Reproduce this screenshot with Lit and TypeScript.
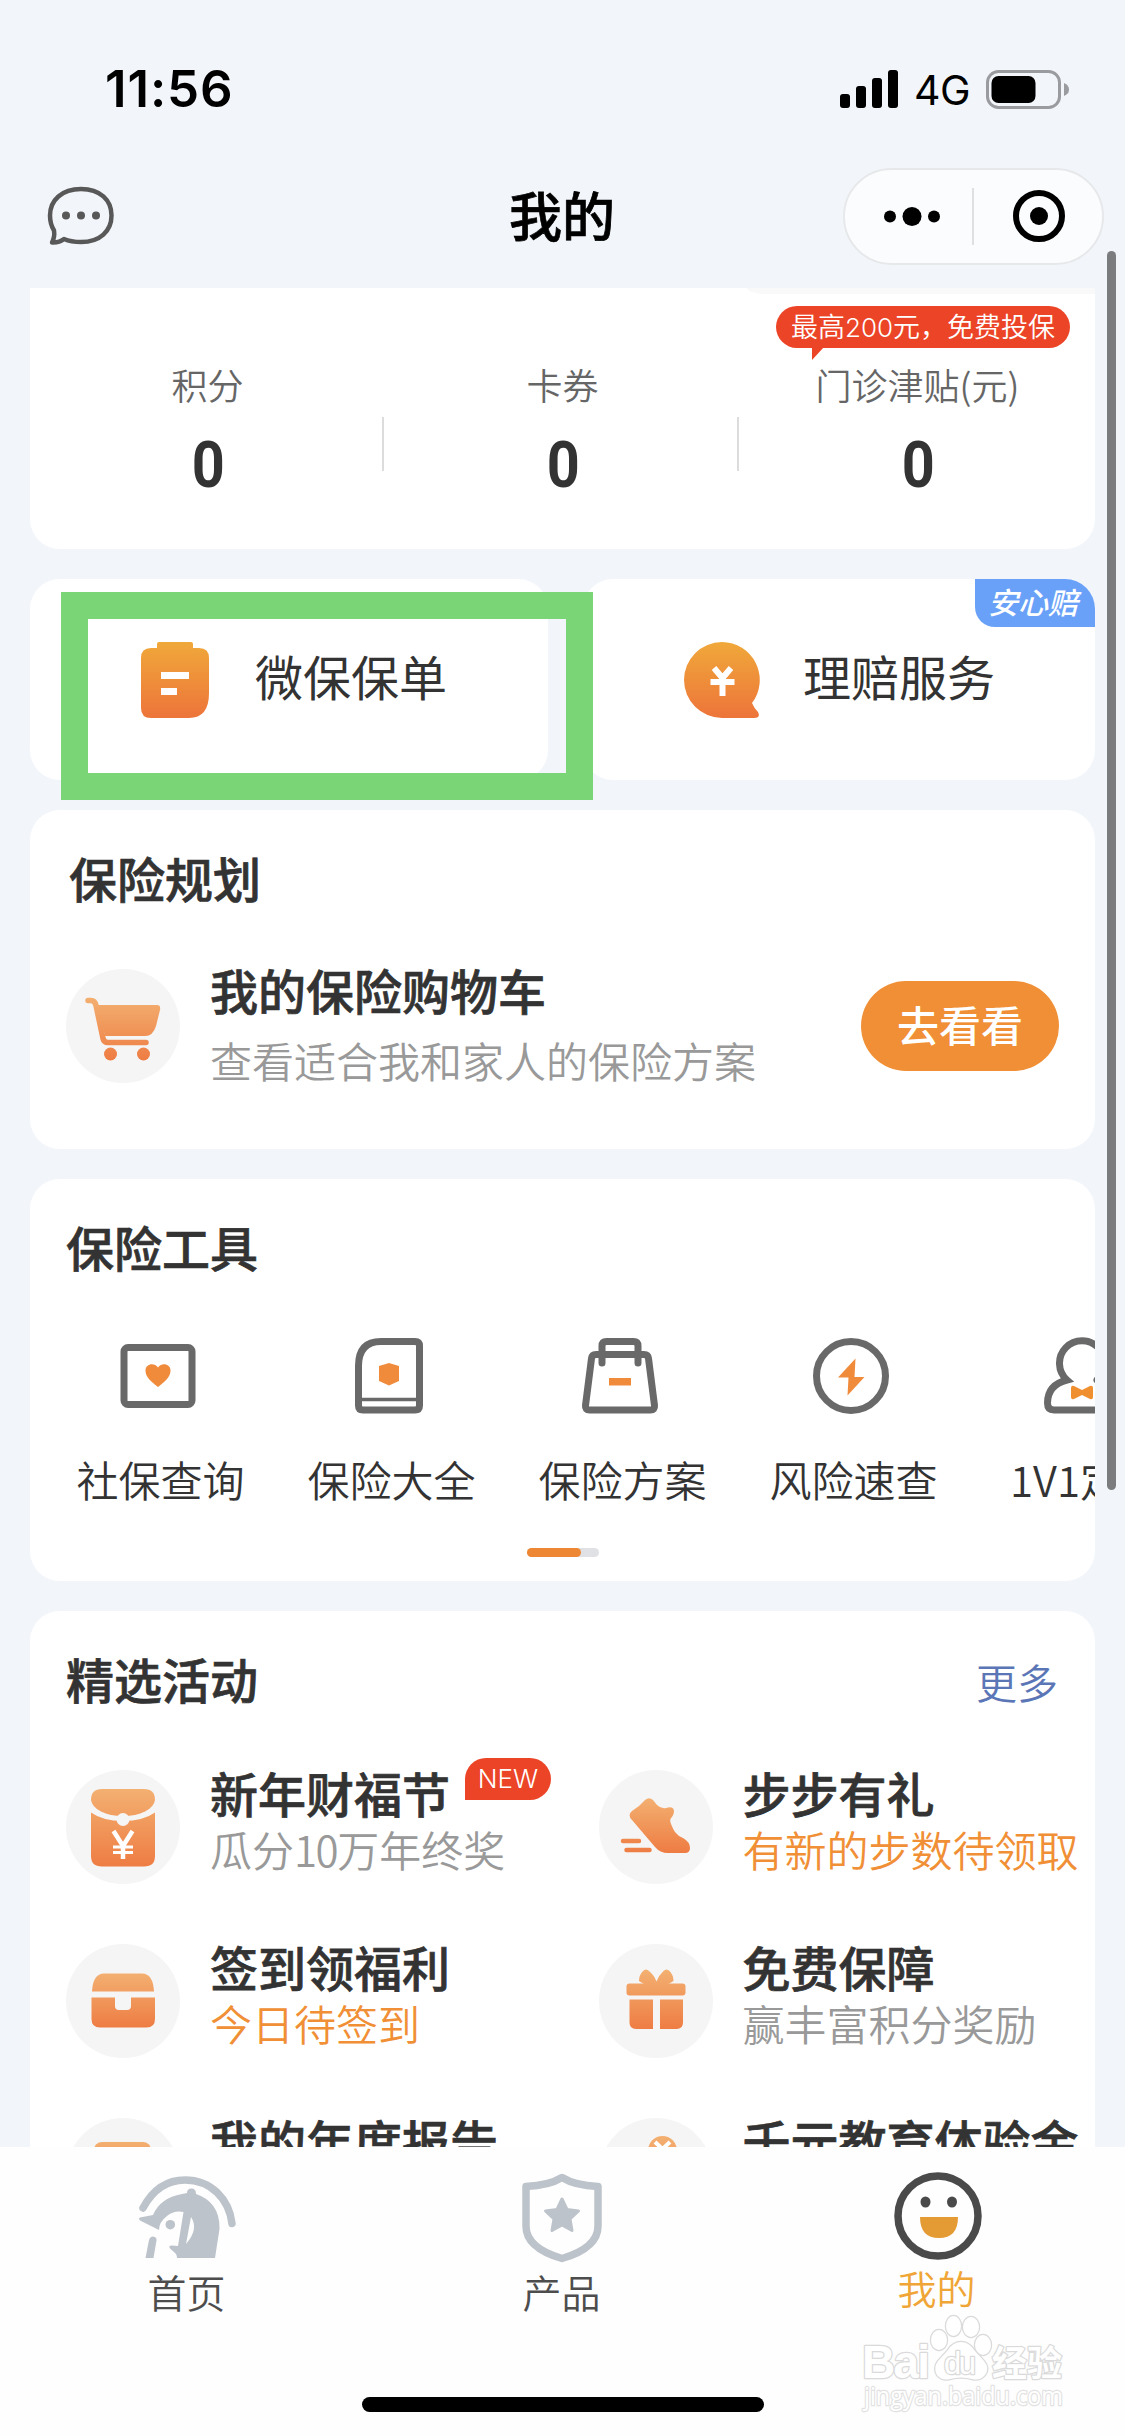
import { LitElement, html, svg, css, TemplateResult } from "lit";
import { customElement } from "lit/decorators.js";

const icon = (w: number, h: number, body: TemplateResult) =>
  html`<svg width=${w} height=${h} viewBox="0 0 ${w} ${h}" fill="none">${body}</svg>`;

const grad = (id: string, y1: number, y2: number, a: string, b: string) => svg`
  <defs><linearGradient id=${id} gradientUnits="userSpaceOnUse" x1="0" x2="0" y1=${y1} y2=${y2}>
    <stop offset="0" stop-color=${a}/><stop offset="1" stop-color=${b}/></linearGradient></defs>`;

const disc = (id: string, y1: number, y2: number, body: TemplateResult) =>
  html`<span class="disc">${icon(114, 114, svg`${grad(id, y1, y2, "#f3b071", "#ee7c43")}${body}`)}</span>`;

const policyIcon = icon(68, 77, svg`
  ${grad("policy", 0, 77, "#f0a93a", "#ed743a")}
  <path fill="url(#policy)" d="M16 3q0-2 2-2h32q2 0 2 2v4h6q10 0 10 10v35q0 25-20 25H10Q0 77 0 67V17Q0 7 10 7h6z"/>
  <path fill="#fff" d="M20 31h28v7H20zM20 47h16v7H20z"/>`);

const claimIcon = icon(77, 77, svg`
  ${grad("claim", 0, 77, "#f0a93a", "#ed743a")}
  <path fill="url(#claim)" d="M38 1a38 38 0 0 1 30 61q2 5 6 9q3 6-4 6H38a38 38 0 0 1 0-76z"/>
  <path stroke="#fff" stroke-width="6" d="M30 27l8.500 10L47 27M38.500 37v18M26.500 41h24"/>`);

const cart = disc("cart", 28, 92, svg`
  <g fill="url(#cart)"><path d="M31 36H91q4 0 3 5l-4 16q-3 10-11 10H39z"/>
  <circle cx="44.500" cy="85" r="6.500"/><circle cx="77.500" cy="85" r="6.500"/></g>
  <path stroke="#f5f5f5" stroke-width="4" d="M41 69h44"/>
  <path stroke="url(#cart)" stroke-width="5.500" stroke-linecap="round" stroke-linejoin="round" d="M22 31.500h3q4 0 5 5l7 33q1 4 5 4h38"/>`);

const envelope = disc("envelope", 19, 97, svg`
  <g fill="url(#envelope)">
  <path d="M25 30q0-11 11-11h42q11 0 11 11q-1 7-10 11.500q-9 4.500-22 4.500t-22-4.500Q26 37 25 30z"/>
  <path d="M25 42.500q12 8.500 32 8.500t32-8.500V86q0 10.500-11 10.500H36Q25 96.500 25 86z"/></g>
  <circle cx="57" cy="49.500" r="6.500" fill="#f5f5f5"/>
  <path stroke="#fff" stroke-width="4.500" d="M47.500 61L57 76l9.500-15M57 75v14"/>
  <path stroke="#fff" stroke-width="3" d="M47 77h20M47 82.500h20"/>`);

const chest = disc("chest", 29, 84, svg`
  <g fill="url(#chest)"><path d="M26 47.500Q27 29.500 38 29.500h38q11 0 12 18z"/>
  <path d="M25.500 53.500H49V62q0 4 4 4h8q4 0 4-4v-8.500h24V75q0 8.500-8.500 8.500H34q-8.500 0-8.500-8.500z"/></g>`);

const shoe = disc("shoe", 28, 83, svg`
  <path fill="url(#shoe)" d="M46 30q4-3.500 8 0l4 5q4 4 9 3q6-2 7.500 1t-1.500 8q-3 2-1 7t4 8q3 4 8 6q7 4 7 10q0 5-5 5H69q-8 0-13-6L33 50q-5-5 0-9q8-5 13-11z"/>
  <path stroke="url(#shoe)" stroke-width="4.500" stroke-linecap="round" d="M24 71h16M27.500 80.100h23"/>`);

const gift = disc("gift", 26, 86, svg`
  <g fill="url(#gift)"><path d="M40 37q0-6 4-10q3-3 6 0q5 4 7.500 10.500Q60 31 64.500 27q3-3 6 0q4 4 4 10l-5 3H45z"/>
  <rect x="27.500" y="39.500" width="59" height="12" rx="3"/>
  <path d="M30.500 55.500H54V85H37q-6.500 0-6.500-6.500zM61 55.500h23v23q0 6.500-6.500 6.500H61z"/></g>`);

const report = disc("report", 22, 90, svg`
  <rect x="28" y="24" width="57" height="60" rx="8" fill="url(#report)"/>`);

const medal = disc("medal", 18, 90, svg`
  <circle cx="63.500" cy="32.500" r="14.500" fill="url(#medal)"/>
  <path stroke="#fff" stroke-width="4" d="M56 24l7.500 7 7.500-7M63.500 31v12"/>`);

const toolStroke = "#696969";
const tools: { label: string; icon: TemplateResult }[] = [
  { label: "社保查询", icon: svg`
    <rect x="6" y="11.500" width="68" height="57" rx="4" stroke=${toolStroke} stroke-width="7"/>
    <path fill="#f08b3c" d="M40 51C31 44 27.500 40 27.500 34.500C27.500 28 36 26 40 31.500C44 26 52.500 28 52.500 34.500C52.500 40 49 44 40 51z"/>` },
  { label: "保险大全", icon: svg`
    <path stroke=${toolStroke} stroke-width="7" d="M9.500 30Q9.500 5.500 32 5.500H66q4.500 0 4.500 4.500V69.500q0 4.500-4.500 4.500H14q-4.500 0-4.500-4.500z"/>
    <path stroke=${toolStroke} stroke-width="3.500" d="M9 63.500h62"/>
    <path fill="#f08b3c" d="M40 27l10 3v15l-10 4.500-10-4.500V30z"/>` },
  { label: "保险方案", icon: svg`
    <path stroke=${toolStroke} stroke-width="7" stroke-linejoin="round" d="M16 18.500H64q4 0 4.500 4l6 47q.5 4.500-4 4.500H9.500q-4.500 0-4-4.500l6-47q.5-4 4.500-4z"/>
    <path stroke=${toolStroke} stroke-width="7" stroke-linecap="round" d="M22 27V10q0-4.500 4.500-4.500h27Q58 5.500 58 10V27"/>
    <path fill="#f08b3c" d="M29 42h22v7.500H29z"/>` },
  { label: "风险速查", icon: svg`
    <circle cx="40" cy="40" r="34.500" stroke=${toolStroke} stroke-width="7"/>
    <path fill="#f08b3c" d="M44.500 22.500L27 41.500H37.500L36.500 59.500L53.500 41H43.500z"/>` },
  { label: "1V1定制", icon: svg`
    <path stroke=${toolStroke} stroke-width="7" stroke-linecap="round" d="M55 44A22.500 22.500 0 1 0 25 44Q5.500 49 5.500 67q0 7 6.500 7H68q6.500 0 6.500-7Q74.500 49 55 44"/>
    <path fill="#f08f30" d="M29 52q0-3 3-2l8 4 8-4q3-1 3 2v9q0 3-3 2l-8-4-8 4q-3 1-3-2z"/>` },
];

interface Activity { title: string; sub: TemplateResult | string; hot?: boolean; badge?: string; icon: TemplateResult }
const activities: Activity[] = [
  { title: "新年财福节", sub: html`瓜分<span class="ten">10</span>万年终奖`, badge: "NEW", icon: envelope },
  { title: "步步有礼", sub: "有新的步数待领取", hot: true, icon: shoe },
  { title: "签到领福利", sub: "今日待签到", hot: true, icon: chest },
  { title: "免费保障", sub: "赢丰富积分奖励", icon: gift },
  { title: "我的年度报告", sub: "", icon: report },
  { title: "千元教育体验金", sub: "", icon: medal },
];

const horse = icon(98, 90, svg`
  <g transform="translate(-1 5)">
  <path stroke="#bdc3ca" stroke-width="7.500" stroke-linecap="round" d="M5 32Q20 4 47 4C73 4 91 23 94 47.500"/>
  <path fill="#bdc3ca" d="M2 41.500L15 39Q22 22 44 18l5-1q0-4.500 4.500-4.500t4.500 5.500Q82 26 81.500 53L77 82H39q0-4-3-6l-4-3.500q-2-3 2-3l6 .5L45.500 36Q36 34 29 40Q21 46 21 54L2 44.500q-2-2 0-3z"/>
  <path fill="#fefefe" d="M53 41q8 12-5 27z"/>
  <circle cx="32.300" cy="48.700" r="4.800" fill="#bdc3ca"/>
  <path fill="#bdc3ca" d="M11 64q1-3.500 4-3.500 4 .5 3.500 4L15.500 82H7.500z"/></g>`);

const shield = icon(84, 94, svg`
  <g transform="translate(-1 3)">
  <path stroke="#bdc3ca" stroke-width="7.500" stroke-linejoin="round" d="M42 5.500Q55 13.500 78 14.500V54Q78 76 42 86.500Q6 76 6 54V14.500Q29 13.500 42 5.500z"/>
  <path fill="#bdc3ca" stroke="#bdc3ca" stroke-width="3" stroke-linejoin="round" d="M42 27l5 10.500 11.500 1.500-8.500 8 2 11.500L42 53l-10 5.500 2-11.500-8.500-8L37 37.500z"/></g>`);

const smile = icon(90, 94, svg`
  <circle cx="45" cy="47" r="40" stroke="#4a4a4a" stroke-width="7.500"/>
  <ellipse cx="32.500" cy="33" rx="5" ry="5.500" fill="#4a4a4a"/><ellipse cx="59" cy="33" rx="5" ry="5.500" fill="#4a4a4a"/>
  <path fill="#e59b33" d="M27 48h38q0 21-19 21T27 48z"/>`);

@customElement("app-root")
export class AppRoot extends LitElement {
  static styles = css`
    :host {
      display: block;
      width: 1125px;
      height: 2436px;
      font-family: "Noto Sans CJK SC", sans-serif;
      color: #333;
    }
    * { box-sizing: border-box; }
    svg { display: block; flex: none; }
    .page {
      position: relative;
      height: 2436px;
      overflow: hidden;
      display: grid;
      grid-template-rows: 134px 154px 1859px 289px;
      background: #f2f5fa;
      white-space: nowrap;
    }
    .status {
      display: flex;
      justify-content: space-between;
      align-items: center;
      padding: 44px 56px 0 105px;
      color: #000;
      font-family: Inter, sans-serif;
    }
    .time { font-size: 51px; font-weight: 600; line-height: 60px; letter-spacing: 0.9px; }
    .signals { display: flex; align-items: center; gap: 16px; font-size: 41px; line-height: 50px; }
    .net { letter-spacing: -0.5px; padding-top: 1px; }
    .header {
      display: grid;
      grid-template-columns: 1fr auto 1fr;
      align-items: center;
      padding: 10px 21px 0 47px;
    }
    .title { font-size: 53px; font-weight: 500; color: #000; line-height: 60px; padding-right: 27px; margin-top: -4px; -webkit-text-stroke: 0.7px; }
    .header .msg { margin-top: 0; }
    .capsule {
      justify-self: end;
      width: 261px;
      height: 97px;
      border: 2px solid #e6e8ea;
      border-radius: 49px;
      background: #fbfcfe;
    }
    .content { padding: 0 30px; overflow: hidden; display: flex; flex-direction: column; gap: 30px; }
    .card { background: #fff; border-radius: 30px; flex: none; }
    .stats {
      height: 261px;
      border-radius: 0 0 30px 30px;
      position: relative;
      display: grid;
      grid-template-columns: repeat(3, 1fr);
    }
    .strip { position: absolute; right: 0; top: 0; width: 348px; height: 6px; background: #f9f9fa; border-bottom-left-radius: 20px 6px; }
    .stat { display: flex; flex-direction: column; align-items: center; padding-top: 70px; position: relative; }
    .stat + .stat::before {
      content: "";
      position: absolute;
      left: -3px;
      top: 129px;
      width: 2px;
      height: 54px;
      background: #dcdcdc;
    }
    .stat-label { font-size: 36px; line-height: 52px; color: #666; font-weight: 350; }
    .stat-num { font-family: Roboto, sans-serif; font-weight: 700; font-size: 64px; line-height: 64px; margin: 24px 0 0 2px; transform: scaleX(0.9); }
    .bubble {
      position: absolute;
      right: 25px;
      top: 18px;
      width: 294px;
      height: 42px;
      line-height: 39px;
      border-radius: 21px;
      background: #ec4427;
      color: #fff;
      font-size: 27px;
      font-weight: 350;
      text-align: center;
    }
    .bubble svg { position: absolute; left: 36px; top: 41px; }
    .latin { font-family: Inter, sans-serif; font-size: 26px; }
    .duo { display: grid; grid-template-columns: 518px 512px; gap: 35px; height: 201px; flex: none; }
    .entry { position: relative; display: flex; align-items: flex-start; padding-top: 62px; font-size: 48px; line-height: 68px; }
    .entry-policy { padding-left: 111px; gap: 46px; }
    .entry-claim { padding-left: 101px; gap: 42px; }
    .flag {
      position: absolute;
      right: 0;
      top: 0;
      width: 120px;
      height: 48px;
      line-height: 45px;
      padding-right: 4px;
      border-radius: 0 30px 0 20px;
      background: #6aa1f8;
      color: #fff;
      font-size: 30px;
      font-weight: 500;
      font-style: italic;
      text-align: center;
    }
    .plan { height: 339px; padding: 33px 36px 0; }
    .h2 { font-size: 48px; font-weight: 500; line-height: 68px; -webkit-text-stroke: 0.7px; }
    .plan .h2 { padding-left: 3px; }
    .item { display: flex; position: relative; }
    .disc { width: 114px; height: 114px; border-radius: 50%; background: #f5f5f5; flex: none; }
    .plan .item { margin-top: 51px; align-items: center; }
    .words { margin-left: 30px; }
    .plan .words { flex: 1; margin-top: -7px; }
    .name { font-size: 48px; font-weight: 500; line-height: 68px; -webkit-text-stroke: 0.7px; }
    .sub { font-size: 42px; font-weight: 350; line-height: 60px; color: #999; }
    .plan .sub { margin-top: 7px; }
    .ten { letter-spacing: -1.5px; }
    .hot { color: #f08f35; }
    .go {
      width: 198px;
      height: 90px;
      border-radius: 45px;
      background: #f08f35;
      color: #fff;
      font-size: 42px;
      font-weight: 500;
      line-height: 86px;
      text-align: center;
    }
    .tools { height: 402px; padding-top: 33px; overflow: hidden; }
    .tools .h2 { padding-left: 36px; }
    .tool-row { display: flex; margin: 56px 0 0 15px; width: 1155px; }
    .tool { width: 231px; flex: none; display: flex; flex-direction: column; align-items: center; }
    .tool svg { margin-right: 6px; }
    .tool-label { font-size: 42px; line-height: 60px; margin-top: 33px; font-weight: 350; }
    .tool:last-child .tool-label { padding-left: 5px; }
    .pager { width: 72px; height: 9px; border-radius: 5px; background: #e0e1e4; margin: 39px auto 0; }
    .thumb { width: 54px; height: 9px; border-radius: 5px; background: #ee8733; }
    .events { height: 700px; padding: 34px 36px 0; }
    .events-head { display: flex; justify-content: space-between; height: 72px; }
    .events-head .h2 { margin-top: -1px; }
    .more { font-size: 41px; font-weight: 350; line-height: 72px; color: #5b76b6; padding-right: 1px; }
    .grid { display: grid; grid-template-columns: 532.500px 460px; grid-auto-rows: 174px; margin-top: 53px; }
    .grid .words { margin-top: -7px; }
    .grid .name { line-height: 58px; }
    .grid .sub { line-height: 54px; height: 54px; margin-top: 1px; }
    .badge {
      position: absolute;
      left: 399px;
      top: -12px;
      width: 86px;
      height: 42px;
      border-radius: 21px 21px 21px 0;
      background: #ec4427;
      color: #fff;
      font: 300 26px/42px Inter, sans-serif;
      text-align: center;
    }
    .tabs { background: #fefefe; display: grid; grid-template-columns: repeat(3, 1fr); position: relative; }
    .tab { display: flex; flex-direction: column; align-items: center; padding-top: 22px; font-size: 39px; line-height: 56px; color: #4d4d4d; font-weight: 350; }
    .tab svg { height: 94px; }
    .tab-text { margin-right: 2px; }
    .on .tab-text { color: #f0a537; margin-top: -4px; }
    .home { position: absolute; left: 362px; bottom: 24px; width: 402px; height: 15px; border-radius: 8px; background: #000; }
    .mark { position: absolute; left: 855px; top: 2308px; }
    .scroll { position: absolute; left: 1107px; top: 251px; width: 9px; height: 1239px; border-radius: 5px; background: #7b7c7e; }
    .frame { position: absolute; left: 61px; top: 592px; width: 532px; height: 208px; border: 27px solid #7ad577; }
    .wm { paint-order: stroke; }
  `;

  render() {
    return html`
      <div class="page">
        <div class="status">
          <span class="time">11:56</span>
          <div class="signals">
            ${icon(58, 38, svg`<g fill="#000"><rect y="24" width="10" height="14" rx="3"/><rect x="16" y="16" width="10" height="22" rx="3"/><rect x="32" y="8" width="10" height="30" rx="3"/><rect x="48" width="10" height="38" rx="3"/></g>`)}
            <span class="net">4G</span>
            ${icon(83, 39, svg`<rect x="1.500" y="1.500" width="72" height="36" rx="11" stroke="#999b9f" stroke-width="3"/><rect x="5.500" y="6" width="44" height="27" rx="7" fill="#000"/><path fill="#999b9f" d="M78 13q5 2 5 6.500T78 26z"/>`)}
          </div>
        </div>
        <div class="header">
          <span class="msg">${icon(68, 60, svg`
            <path stroke="#585858" stroke-width="4.500" stroke-linejoin="round" d="M34 3C53 3 64.500 14 64.500 29.500S53 56 34 56Q24 56 17 53Q12 57 5 56.500Q8 51 7 44.500Q3 38 3 29.500C3 14 15 3 34 3z"/>
            <g fill="#585858"><circle cx="19" cy="29.500" r="4"/><circle cx="34" cy="29.500" r="4"/><circle cx="49" cy="29.500" r="4"/></g>`)}</span>
          <span class="title">我的</span>
          <div class="capsule">${icon(257, 93, svg`
            <g fill="#000"><circle cx="45" cy="46.500" r="6"/><circle cx="67" cy="46.500" r="9.500"/><circle cx="89" cy="46.500" r="6"/><circle cx="194" cy="46" r="9"/></g>
            <path stroke="#d5d7da" stroke-width="1.500" d="M128 18v57"/>
            <circle cx="194" cy="46" r="23" stroke="#000" stroke-width="6"/>`)}</div>
        </div>
        <div class="content">
          <section class="card stats">
            <span class="strip"></span>
            <div class="stat"><span class="stat-label">积分</span><span class="stat-num">0</span></div>
            <div class="stat"><span class="stat-label">卡券</span><span class="stat-num">0</span></div>
            <div class="stat"><span class="stat-label">门诊津贴(元)</span><span class="stat-num">0</span></div>
            <div class="bubble">最高<span class="latin">200</span>元，免费投保${icon(12, 13, svg`<path fill="#ec4427" d="M0 0h12L0 13z"/>`)}</div>
          </section>
          <div class="duo">
            <div class="card entry entry-policy">${policyIcon}<span>微保保单</span></div>
            <div class="card entry entry-claim">${claimIcon}<span>理赔服务</span><span class="flag">安心赔</span></div>
          </div>
          <section class="card plan">
            <div class="h2">保险规划</div>
            <div class="item">
              ${cart}
              <div class="words"><div class="name">我的保险购物车</div><div class="sub">查看适合我和家人的保险方案</div></div>
              <div class="go">去看看</div>
            </div>
          </section>
          <section class="card tools">
            <div class="h2">保险工具</div>
            <div class="tool-row">
              ${tools.map((t) => html`<div class="tool">${icon(80, 80, t.icon)}<span class="tool-label">${t.label}</span></div>`)}
            </div>
            <div class="pager"><div class="thumb"></div></div>
          </section>
          <section class="card events">
            <div class="events-head"><span class="h2">精选活动</span><span class="more">更多</span></div>
            <div class="grid">
              ${activities.map((a) => html`<div class="item">${a.icon}
                <div class="words"><div class="name">${a.title}</div><div class="sub ${a.hot ? "hot" : ""}">${a.sub}</div></div>
                ${a.badge ? html`<span class="badge">${a.badge}</span>` : ""}</div>`)}
            </div>
          </section>
        </div>
        <nav class="tabs">
          <div class="tab">${horse}<span class="tab-text">首页</span></div>
          <div class="tab">${shield}<span class="tab-text">产品</span></div>
          <div class="tab on">${smile}<span class="tab-text">我的</span></div>
          <span class="home"></span>
        </nav>
        <div class="mark">${icon(220, 115, svg`
          <g class="wm" fill="#fff" stroke="#dadada" stroke-width="2.500" stroke-linejoin="round">
          <text x="7" y="70" font-family="Liberation Sans" font-weight="700" font-size="46" textLength="68">Bai</text>
          <ellipse cx="84" cy="32" rx="8" ry="10"/><ellipse cx="98.500" cy="18" rx="7.500" ry="10"/><ellipse cx="116" cy="19" rx="8" ry="10"/><ellipse cx="128" cy="37" rx="8" ry="10"/>
          <path d="M106 34q8 0 13 8l10 11q6 7 1 14-5 6-13 4-11-3-22 0-8 2-13-4-4-7 1-14l10-11q5-8 13-8z"/>
          <text x="89" y="66" font-family="Liberation Sans" font-size="31" textLength="32">du</text>
          <text x="137" y="68" font-family="Noto Sans CJK SC" font-weight="700" font-size="35">经验</text>
          <text x="9" y="97" font-family="Open Sans" font-size="26" stroke="#e2e2e2" textLength="199" lengthAdjust="spacingAndGlyphs">jingyan.baidu.com</text></g>`)}</div>
        <span class="scroll"></span>
        <span class="frame"></span>
      </div>`;
  }
}
